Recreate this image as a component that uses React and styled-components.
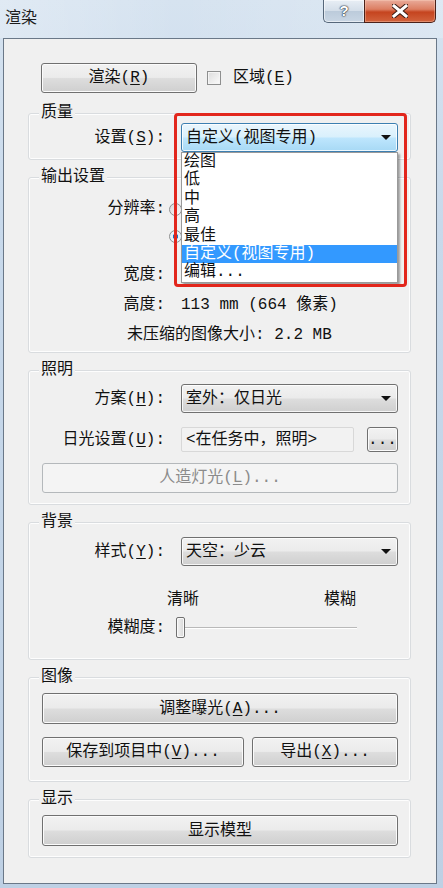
import React from "react";
import styled, { createGlobalStyle } from "styled-components";

const GlobalStyle = createGlobalStyle`
  html, body {
    margin: 0;
    padding: 0;
  }
  body {
    width: 443px;
    height: 888px;
    overflow: hidden;
    font-family: "Liberation Mono", "Noto Sans CJK SC", monospace;
    font-size: 16px;
    line-height: 18px;
    color: #111;
  }
  * {
    box-sizing: border-box;
  }
`;

const Window = styled.div`
  width: 443px;
  height: 888px;
  display: flex;
  flex-direction: column;
  background: linear-gradient(180deg, #d6e3f0 0%, #c8d9eb 25%, #bed0e4 100%);
`;

const TitleBar = styled.div`
  height: 38px;
  flex: none;
  display: flex;
  align-items: flex-start;
  justify-content: space-between;
  padding: 0 7px 0 5px;
  background: linear-gradient(90deg, rgba(255, 255, 255, 0.25), rgba(255, 255, 255, 0) 40%, rgba(255, 255, 255, 0.2));
`;

const Title = styled.div`
  margin-top: 10px;
  font-size: 16px;
  line-height: 18px;
  color: #1c1c1c;
`;

const Caption = styled.div`
  display: flex;
`;

const HelpButton = styled.div`
  width: 41px;
  height: 23px;
  border: 1px solid #56677a;
  border-top: none;
  border-right: none;
  border-radius: 0 0 0 5px;
  background: linear-gradient(180deg, #e8eef5 0%, #d4dee9 48%, #bccbdb 52%, #c9d6e4 100%);
  box-shadow: inset 0 0 0 1px rgba(255, 255, 255, 0.55);
  display: flex;
  align-items: center;
  justify-content: center;
  color: #fff;
  font-family: "Liberation Sans", sans-serif;
  font-weight: bold;
  font-size: 15px;
  text-shadow: 0 0 1px #2a3440, 0 0 1px #2a3440, 0 0 2px #2a3440;
`;

const CloseButton = styled.div`
  width: 72px;
  height: 23px;
  border: 1px solid #4a2119;
  border-top: none;
  border-radius: 0 0 5px 0;
  background: linear-gradient(180deg, #e9ab9a 0%, #dc7e62 42%, #c5441f 55%, #d2633d 100%);
  box-shadow: inset 0 0 0 1px rgba(255, 220, 200, 0.35);
  display: flex;
  align-items: center;
  justify-content: center;
`;

const Client = styled.div`
  flex: 1;
  margin: 0 6px 4px 3px;
  border: 1px solid #6a7888;
  background: #f0f0f0;
  padding: 24px 25px 0 24px;
  display: flex;
  flex-direction: column;
`;

const TopRow = styled.div`
  display: flex;
  align-items: center;
  gap: 10px;
  margin-left: 13px;
`;

const Button = styled.button`
  font: inherit;
  color: #111;
  height: ${(p) => p.$h || 30}px;
  width: ${(p) => (p.$w ? `${p.$w}px` : "auto")};
  flex: ${(p) => (p.$w ? "none" : "1")};
  padding: 0;
  border: 1px solid #707070;
  border-radius: 3px;
  background: linear-gradient(180deg, #f2f2f2 0%, #ebebeb 48%, #dddddd 52%, #cfcfcf 100%);
  box-shadow: inset 0 0 0 1px #fbfbfb;
  display: flex;
  align-items: center;
  justify-content: center;
  white-space: nowrap;

  &:disabled {
    color: #8b8b8b;
    border-color: #b4b8bb;
    background: #f4f4f4;
    box-shadow: none;
  }
`;

const Key = styled.u`
  text-underline-offset: 2px;
`;

const CheckLabel = styled.label`
  display: flex;
  align-items: center;
  gap: 12px;
`;

const CheckBox = styled.span`
  width: 14px;
  height: 14px;
  border: 1px solid #8e8f8f;
  background: linear-gradient(135deg, #dcdcdc, #fbfbfb);
  box-shadow: inset 0 0 0 1px #f4f4f4;
`;

const Group = styled.fieldset`
  margin: ${(p) => p.$mt}px 0 0;
  padding: ${(p) => p.$pad};
  border: 1px solid #d9dcdf;
  border-radius: 3px;
  box-shadow: inset 0 0 0 1px #fdfdfd;
  min-inline-size: 0;
  display: flex;
  flex-direction: column;
`;

const Legend = styled.legend`
  margin-left: -3px;
  padding: 0 2px;
  line-height: 18px;
  height: 18px;
  background: #f0f0f0;
`;

const FormRow = styled.div`
  display: grid;
  grid-template-columns: 123px 1fr;
  column-gap: 16px;
  align-items: center;
  margin-top: ${(p) => p.$mt || 0}px;
  height: ${(p) => (p.$h ? `${p.$h}px` : "auto")};
`;

const Label = styled.span`
  text-align: right;
  white-space: nowrap;
  align-self: ${(p) => (p.$top ? "start" : "center")};
  line-height: ${(p) => (p.$top ? "27px" : "18px")};
`;

const ComboAnchor = styled.div`
  position: relative;
  z-index: ${(p) => (p.$open ? 10 : "auto")};
`;

const Combo = styled.div`
  height: 29px;
  border: 1px solid ${(p) => (p.$open ? "#3c7fb1" : "#707070")};
  border-radius: 3px;
  background: ${(p) =>
    p.$open
      ? "linear-gradient(180deg, #eaf6fd 0%, #d9f0fc 48%, #bee6fd 52%, #a7d9f5 100%)"
      : "linear-gradient(180deg, #f2f2f2 0%, #ebebeb 48%, #dddddd 52%, #cfcfcf 100%)"};
  box-shadow: inset 0 0 0 1px rgba(255, 255, 255, 0.8);
  display: flex;
  align-items: center;
  justify-content: space-between;
  padding: 0 5px 0 4px;
  white-space: nowrap;
`;

const Arrow = styled.span`
  width: 0;
  height: 0;
  border-left: 5px solid transparent;
  border-right: 5px solid transparent;
  border-top: 5px solid #111;
  margin-right: 1px;
`;

const DropList = styled.ul`
  position: absolute;
  top: 100%;
  left: 0;
  right: 0;
  margin: 0;
  padding: 0;
  list-style: none;
  background: #fff;
  border: 1px solid #9a9a9a;
  box-shadow: 2px 2px 2px rgba(0, 0, 0, 0.35);
`;

const DropItem = styled.li`
  height: 18.4px;
  line-height: 18px;
  padding-left: 2px;
  white-space: nowrap;
  background: ${(p) => (p.$active ? "#3399ff" : "transparent")};
  color: ${(p) => (p.$active ? "#fff" : "#111")};
`;

const Callout = styled.div`
  position: absolute;
  top: -10px;
  left: -7px;
  width: 233px;
  height: 174px;
  border: 3px solid #e2261c;
  border-radius: 4px;
  pointer-events: none;
`;

const RadioList = styled.div`
  display: flex;
  flex-direction: column;
  margin-left: -12px;
`;

const RadioRow = styled.div`
  height: 27px;
  display: flex;
  align-items: center;
`;

const Radio = styled.span`
  width: 13px;
  height: 13px;
  border-radius: 50%;
  border: 1px solid #8e8f8f;
  background: ${(p) =>
    p.$on
      ? "radial-gradient(circle, #1a6fc0 0 2.5px, #e8f2fb 3px)"
      : "linear-gradient(135deg, #d8d8d8, #fbfbfb)"};
`;

const InfoRow = styled(FormRow)`
  height: 30px;
`;

const Note = styled.div`
  height: 30px;
  display: flex;
  align-items: center;
  padding-left: 85px;
  white-space: nowrap;
`;

const Field = styled.div`
  flex: 1;
  height: 25px;
  border: 1px solid #d8d8d8;
  border-radius: 2px;
  background: #f2f2f2;
  display: flex;
  align-items: center;
  padding-left: 4px;
  white-space: nowrap;
`;

const FieldRow = styled.div`
  display: flex;
  align-items: center;
  gap: 13px;
`;

const Scale = styled.div`
  display: flex;
  justify-content: space-between;
  margin: 0 42px 0 -14px;
`;

const Slider = styled.div`
  display: flex;
  align-items: center;
  height: 21px;
  margin: 0 41px 0 -5px;
`;

const Thumb = styled.span`
  width: 9px;
  height: 21px;
  border: 1px solid #707070;
  border-radius: 2px;
  background: linear-gradient(90deg, #f2f2f2, #d8d8d8);
  box-shadow: inset 0 0 0 1px #fafafa;
`;

const Track = styled.span`
  flex: 1;
  height: 2px;
  border-top: 1px solid #b9b9b9;
  border-bottom: 1px solid #ffffff;
`;

const ButtonRow = styled.div`
  display: flex;
  gap: 8px;
  margin-top: ${(p) => p.$mt || 0}px;
`;

const qualityOptions = ["绘图", "低", "中", "高", "最佳", "自定义(视图专用)", "编辑..."];

export default function App() {
  return (
    <Window>
      <GlobalStyle />
      <TitleBar>
        <Title>渲染</Title>
        <Caption>
          <HelpButton>?</HelpButton>
          <CloseButton>
            <svg width="16" height="14" viewBox="0 0 16 14">
              <path d="M2 2 L14 12 M14 2 L2 12" stroke="#3a1a12" strokeWidth="5" strokeLinecap="square" />
              <path d="M2 2 L14 12 M14 2 L2 12" stroke="#ffffff" strokeWidth="3" strokeLinecap="square" />
            </svg>
          </CloseButton>
        </Caption>
      </TitleBar>

      <Client>
        <TopRow>
          <Button $w={156}>
            渲染(<Key>R</Key>)
          </Button>
          <CheckLabel>
            <CheckBox />
            <span>
              区域(<Key>E</Key>)
            </span>
          </CheckLabel>
        </TopRow>

        <Group $mt={11} $pad="1px 12px 7px 13px">
          <Legend>质量</Legend>
          <FormRow>
            <Label>
              设置(<Key>S</Key>):
            </Label>
            <ComboAnchor $open>
              <Combo $open>
                <span>自定义(视图专用)</span>
                <Arrow />
              </Combo>
              <DropList>
                {qualityOptions.map((o, i) => (
                  <DropItem key={o} $active={i === 5}>
                    {o}
                  </DropItem>
                ))}
              </DropList>
              <Callout />
            </ComboAnchor>
          </FormRow>
        </Group>

        <Group $mt={8} $pad="10px 12px 2px 13px">
          <Legend>输出设置</Legend>
          <FormRow>
            <Label $top>分辨率:</Label>
            <RadioList>
              <RadioRow>
                <Radio />
              </RadioRow>
              <RadioRow>
                <Radio $on />
              </RadioRow>
            </RadioList>
          </FormRow>
          <InfoRow $mt={10}>
            <Label>宽度:</Label>
            <span>183 mm (1077 像素)</span>
          </InfoRow>
          <InfoRow>
            <Label>高度:</Label>
            <span>113 mm (664 像素)</span>
          </InfoRow>
          <Note>未压缩的图像大小: 2.2 MB</Note>
        </Group>

        <Group $mt={8} $pad="5px 12px 11px 13px">
          <Legend>照明</Legend>
          <FormRow>
            <Label>
              方案(<Key>H</Key>):
            </Label>
            <Combo>
              <span>室外：仅日光</span>
              <Arrow />
            </Combo>
          </FormRow>
          <FormRow $mt={14}>
            <Label>
              日光设置(<Key>U</Key>):
            </Label>
            <FieldRow>
              <Field>&lt;在任务中，照明&gt;</Field>
              <Button $w={31} $h={25}>
                ...
              </Button>
            </FieldRow>
          </FormRow>
          <ButtonRow $mt={11}>
            <Button disabled>
              人造灯光(<Key>L</Key>)...
            </Button>
          </ButtonRow>
        </Group>

        <Group $mt={8} $pad="6px 12px 21px 13px">
          <Legend>背景</Legend>
          <FormRow>
            <Label>
              样式(<Key>Y</Key>):
            </Label>
            <Combo>
              <span>天空：少云</span>
              <Arrow />
            </Combo>
          </FormRow>
          <FormRow $mt={25}>
            <span />
            <Scale>
              <span>清晰</span>
              <span>模糊</span>
            </Scale>
          </FormRow>
          <FormRow $mt={8}>
            <Label>模糊度:</Label>
            <Slider>
              <Thumb />
              <Track />
            </Slider>
          </FormRow>
        </Group>

        <Group $mt={8} $pad="7px 12px 14px 13px">
          <Legend>图像</Legend>
          <ButtonRow>
            <Button $h={31}>
              调整曝光(<Key>A</Key>)...
            </Button>
          </ButtonRow>
          <ButtonRow $mt={13}>
            <Button $w={202}>
              保存到项目中(<Key>V</Key>)...
            </Button>
            <Button>
              导出(<Key>X</Key>)...
            </Button>
          </ButtonRow>
        </Group>

        <Group $mt={8} $pad="7px 12px 11px 13px">
          <Legend>显示</Legend>
          <ButtonRow>
            <Button $h={31}>显示模型</Button>
          </ButtonRow>
        </Group>
      </Client>
    </Window>
  );
}
